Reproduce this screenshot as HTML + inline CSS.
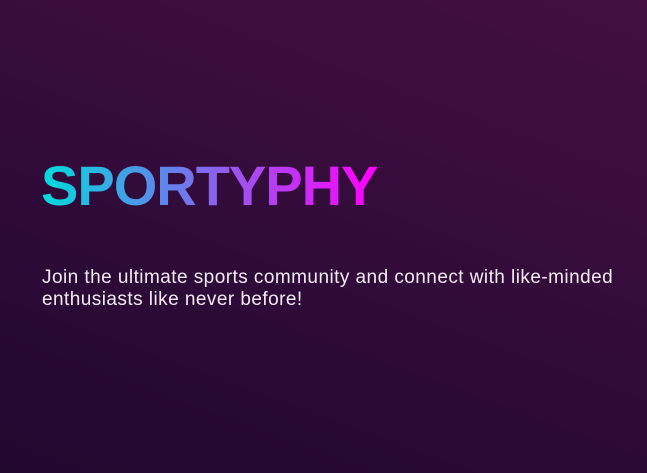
<!DOCTYPE html>
<html><head><meta charset="utf-8"><style>
html,body{margin:0;padding:0;width:647px;height:473px;overflow:hidden}
body{background:linear-gradient(20deg,#22072f 0%,#2e0a38 40%,#3a0d3d 70%,#430f42 100%);font-family:"Liberation Sans",sans-serif;position:relative}
h1{position:absolute;left:41px;top:151px;margin:0;font-size:56px;font-weight:bold;line-height:70px;letter-spacing:-1px;
background:linear-gradient(90deg,#00dcdc 0%,#5a8aea 35%,#a050f0 60%,#ff00ff 100%);-webkit-background-clip:text;background-clip:text;color:transparent;white-space:nowrap}
p{position:absolute;left:42px;top:267px;margin:0;font-size:19px;line-height:22px;color:#f4ecf4;width:600px;letter-spacing:0.45px;white-space:nowrap}
</style></head><body>
<h1>SPORTYPHY</h1>
<p>Join the ultimate sports community and connect with like-minded<br>enthusiasts like never before!</p>
</body></html>
